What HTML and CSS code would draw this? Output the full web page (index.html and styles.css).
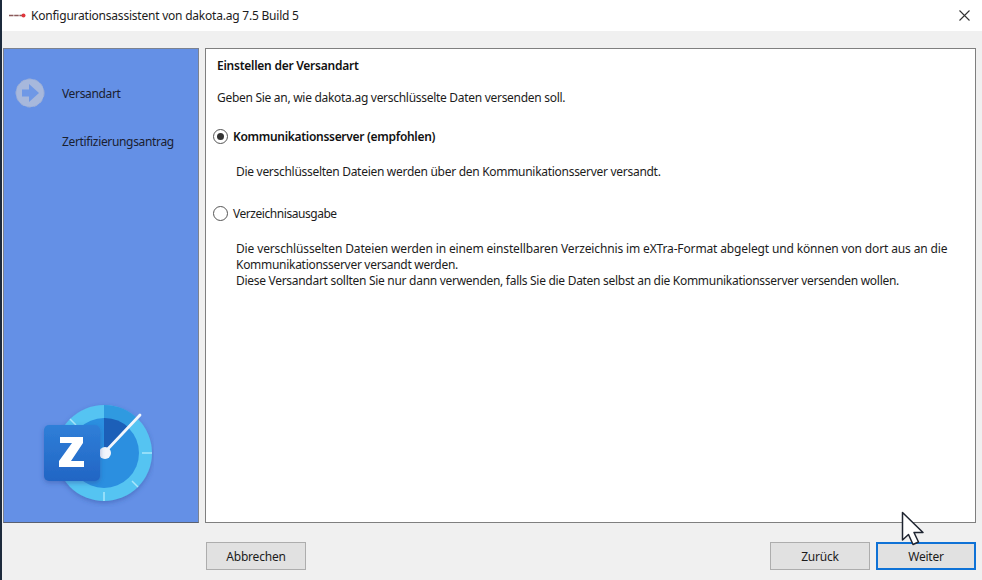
FILE: index.html
```html
<!DOCTYPE html>
<html lang="de">
<head>
<meta charset="utf-8">
<title>Konfigurationsassistent</title>
<link rel="stylesheet" href="styles.css">
</head>
<body>
<div class="window">
  <header class="titlebar">
    <svg class="app-icon" width="17" height="5" viewBox="0 0 17 5"><path d="M0 2.500H14" stroke="#8a5a5a" stroke-width="1.600" stroke-dasharray="4.500 .7"/><circle cx="14.500" cy="2.500" r="2" fill="#e0363c"/></svg>
    <span class="title">Konfigurationsassistent von dakota.ag 7.5 Build 5</span>
    <svg class="close" width="11" height="11" viewBox="0 0 11 11"><path d="M.5.5l10 10M10.500.5l-10 10" stroke="#333" stroke-width="1.100" fill="none"/></svg>
  </header>
  <div class="body">
    <div class="content">
      <aside class="sidebar">
        <div class="step step-first">
          <svg class="step-icon" width="30" height="30" viewBox="0 0 30 30"><circle cx="15" cy="15" r="14" fill="#a7b8dc"/><circle cx="15" cy="15" r="14" fill="none" stroke="#9fb0d6" stroke-dasharray="4 3"/><path d="M7 11.500h7V6l10 9-10 9v-5.500H7z" fill="#6f98e6"/></svg>
          <span>Versandart</span>
        </div>
        <div class="step step-second"><span>Zertifizierungsantrag</span></div>
        <svg class="logo" width="116" height="108" viewBox="0 0 116 108">
          <defs>
            <linearGradient id="zg" x1="0" y1="0" x2="0" y2="1"><stop offset="0" stop-color="#2f7fd8"/><stop offset="1" stop-color="#2265c4"/></linearGradient>
            <filter id="sh" x="-20%" y="-20%" width="140%" height="140%"><feDropShadow dx="0" dy="2" stdDeviation="2.500" flood-color="#2a4a9a" flood-opacity=".45"/></filter>
          </defs>
          <circle cx="66" cy="54" r="48" fill="#55c4f2" filter="url(#sh)"/>
          <path d="M66 6A48 48 0 0 1 100 20L66 54z" fill="#2f9ae0"/>
          <circle cx="66" cy="54" r="35" fill="#2b8fe0"/>
          <path d="M66 19A35 35 0 0 1 91 29L66 54z" fill="#1c5fb8"/>
          <path d="M66 102v-9M114 54h-10M100 88l-6-6M32 20l6 6" stroke="#a8e6fb" stroke-width="1.500"/>
          <path d="M67 53L102 16" stroke="#f2f6fc" stroke-width="2.800" stroke-linecap="round"/>
          <circle cx="67" cy="54" r="6" fill="#f2f6fc"/>
          <rect x="6" y="26" width="56" height="56" rx="5" fill="url(#zg)" filter="url(#sh)"/>
          <path d="M22 38h23v6L33 62h13v6H21v-6L34 44H22z" fill="#fff"/>
        </svg>
      </aside>
      <main class="panel">
        <h1 class="heading">Einstellen der Versandart</h1>
        <p class="intro">Geben Sie an, wie dakota.ag verschlüsselte Daten versenden soll.</p>
        <label class="option option-first"><span class="radio radio-on"></span><span class="option-label-bold">Kommunikationsserver (empfohlen)</span></label>
        <p class="desc desc-first">Die verschlüsselten Dateien werden über den Kommunikationsserver versandt.</p>
        <label class="option option-second"><span class="radio"></span><span class="option-label">Verzeichnisausgabe</span></label>
        <p class="desc desc-second"><span class="line-wide">Die verschlüsselten Dateien werden in einem einstellbaren Verzeichnis im eXTra-Format abgelegt und können von dort aus an die</span><br>Kommunikationsserver versandt werden.<br>Diese Versandart sollten Sie nur dann verwenden, falls Sie die Daten selbst an die Kommunikationsserver versenden wollen.</p>
      </main>
    </div>
    <footer class="footer">
      <button class="btn">Abbrechen</button>
      <div class="nav">
        <button class="btn">Zurück</button>
        <button class="btn btn-default">Weiter</button>
      </div>
    </footer>
  </div>
  <svg class="cursor" width="24" height="36" viewBox="0 0 24 36"><path d="M1.500 1.500V29l6-5.500 4.500 10 5.500-2.500-4.500-9.500H22z" fill="#fff" stroke="#1e2430" stroke-width="1.500" stroke-linejoin="round"/></svg>
</div>
</body>
</html>
```
FILE: styles.css
```css
html, body {
  margin: 0;
  padding: 0;
  height: 100%;
}
body {
  font-family: "Noto Sans", "Open Sans", sans-serif;
  font-size: 12px;
  color: #1c1c1c;
  background: #f0f0f0;
  overflow: hidden;
}
.window {
  position: relative;
  width: 982px;
  height: 580px;
  display: flex;
  flex-direction: column;
  border-left: 2px solid #1c2a3c;
  box-sizing: border-box;
}
.titlebar {
  height: 31px;
  flex: none;
  background: #fff;
  display: flex;
  align-items: center;
  padding: 0 12px 0 7px;
}
.app-icon { margin-right: 5px; }
.title { flex: 1; letter-spacing: -0.22px; }
.body {
  flex: 1;
  display: flex;
  flex-direction: column;
  padding: 17px 6px 10px 1px;
}
.content {
  height: 475px;
  display: flex;
  gap: 6px;
}
.sidebar {
  position: relative;
  width: 194px;
  flex: none;
  background: #6490e6;
  border: 1px solid #7b8290;
  border-bottom-color: #5a6070;
}
.step {
  display: flex;
  align-items: center;
  position: relative;
  height: 20px;
  padding-left: 58px;
  color: #1a2030;
  letter-spacing: -0.34px;
}
.step-first { margin-top: 34px; }
.step-second { margin-top: 28px; }
.step-icon {
  position: absolute;
  left: 11px;
  top: -5px;
}
.logo {
  position: absolute;
  left: 34px;
  top: 350px;
}
.panel {
  flex: 1;
  background: #fff;
  border: 1px solid #7f7f7f;
  padding: 0 11px;
}
.heading {
  margin: 8px 0 0;
  font-size: 12px;
  font-weight: 600;
  line-height: 17px;
  color: #111;
  letter-spacing: -0.25px;
}
.intro {
  margin: 15px 0 0;
  line-height: 17px;
  letter-spacing: -0.29px;
}
.option {
  display: flex;
  align-items: center;
  gap: 5px;
  height: 17px;
  margin-left: -4px;
}
.option-first { margin-top: 22px; }
.option-second { margin-top: 25px; }
.radio {
  width: 13px;
  height: 13px;
  flex: none;
  border: 1px solid #555;
  border-radius: 50%;
  background: #fff;
  position: relative;
}
.radio-on::after {
  content: "";
  position: absolute;
  left: 3px;
  top: 3px;
  width: 7px;
  height: 7px;
  border-radius: 50%;
  background: #333;
}
.option-label-bold {
  font-weight: 600;
  color: #111;
  letter-spacing: -0.3px;
}
.option-label { letter-spacing: -0.45px; }
.desc {
  margin: 0 0 0 19px;
  line-height: 16px;
  letter-spacing: -0.29px;
}
.line-wide { letter-spacing: -0.14px; }
.desc-first { margin-top: 19px; }
.desc-second { margin-top: 19px; }
.footer {
  display: flex;
  justify-content: space-between;
  margin-top: 19px;
  padding-left: 203px;
}
.nav { display: flex; gap: 6px; }
.btn {
  width: 100px;
  height: 28px;
  font: inherit;
  letter-spacing: -0.2px;
  color: #1c1c1c;
  background: #e1e1e1;
  border: 1px solid #adadad;
  padding: 0;
}
.btn-default {
  border: 2px solid #0f72d6;
}
.cursor {
  position: absolute;
  left: 899px;
  top: 511px;
}
```
